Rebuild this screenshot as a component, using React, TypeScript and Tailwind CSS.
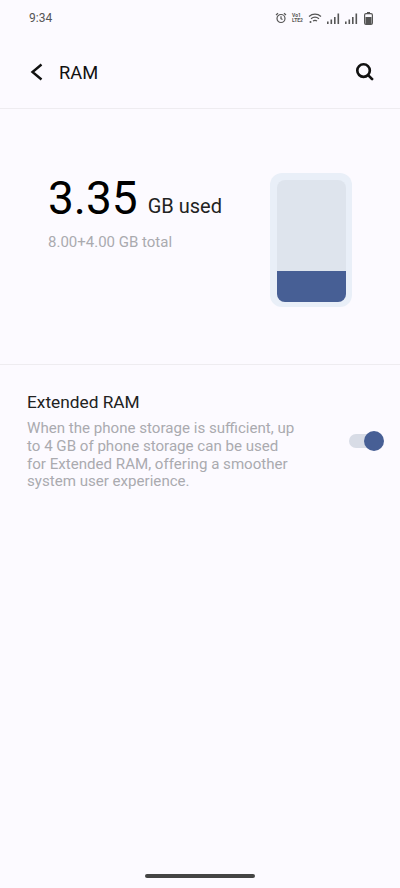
function StatusIcons() {
  return (
    <div className="flex items-center text-[#555]">
      {/* alarm */}
      <svg width="12" height="12" viewBox="0 0 12 12" fill="none" stroke="currentColor" strokeWidth="1.2">
        <circle cx="6" cy="6.5" r="4" />
        <path d="M6 4.3V6.7L7.5 7.6M1 3 3 1.2M11 3 9 1.2" />
      </svg>
      {/* volte labels */}
      <div className="ml-[5px] flex w-[13px] flex-col text-[5px] font-bold leading-[5px]">
        <span>Vo1</span>
        <span>LTE2</span>
      </div>
      {/* wifi */}
      <svg className="ml-[3px]" width="14" height="12" viewBox="0 0 14 12" fill="none" stroke="currentColor" strokeWidth="1.2">
        <path d="M1 4.5C4.5 1.4 9.5 1.4 13 4.5M3 6.8C5.3 4.9 8.7 4.9 11 6.8M5 9C6.1 8.2 7.9 8.2 9 9" />
        <circle cx="2.5" cy="10" r="1" fill="currentColor" stroke="none" />
      </svg>
      <Signal />
      <Signal />
      {/* battery */}
      <svg className="ml-[6px]" width="9" height="13" viewBox="0 0 9 13" fill="none">
        <rect x="3" y="0" width="3" height="2" fill="currentColor" />
        <rect x="0.6" y="1.6" width="7.8" height="10.8" rx="1.4" stroke="currentColor" strokeWidth="1.2" />
        <rect x="1.5" y="5" width="6" height="7" fill="currentColor" />
      </svg>
    </div>
  );
}

function Signal() {
  return (
    <svg className="ml-[5px]" width="13" height="11" viewBox="0 0 13 11" fill="currentColor">
      <rect x="0" y="8.5" width="1.6" height="2.5" />
      <rect x="3.5" y="6.5" width="1.6" height="4.5" />
      <rect x="7" y="4" width="1.6" height="7" />
      <rect x="10.5" y="0.5" width="1.6" height="10.5" />
    </svg>
  );
}

export default function App() {
  return (
    <div className="flex h-[888px] w-[400px] flex-col overflow-hidden bg-[#fcfaff] [font-family:Roboto,sans-serif]">
      {/* status bar */}
      <div className="flex h-[36px] items-center justify-between pl-[29px] pr-[27px]">
        <span className="text-[12px] text-[#555]">9:34</span>
        <StatusIcons />
      </div>

      {/* header */}
      <div className="flex h-[73px] items-center justify-between border-b border-[#eeecf0] pb-[1px] pl-[30px] pr-[26px]">
        <div className="flex items-center gap-[16px]">
          <svg width="13" height="18" viewBox="0 0 13 18" fill="none" stroke="#111" strokeWidth="2.4">
            <path d="M11.5 1.5 2.5 9l9 7.5" />
          </svg>
          <span className="pt-[2px] text-[18.3px] text-[#111]">RAM</span>
        </div>
        <svg className="mb-[1px]" width="19" height="19" viewBox="0 0 20 20" fill="none" stroke="#111" strokeWidth="2.8">
          <circle cx="9" cy="9" r="6.6" />
          <path d="M13.8 13.8 18 18" strokeLinecap="round" />
        </svg>
      </div>

      {/* usage */}
      <div className="flex h-[256px] justify-between border-b border-[#eeecf0] pl-[48px] pr-[48px] pt-[64px]">
        <div>
          <div className="flex items-baseline gap-[10px] text-black">
            <span className="text-[46px] leading-[50px]">3.35</span>
            <span className="relative top-[-1px] text-[20px] text-[#222]">GB used</span>
          </div>
          <p className="mt-[8px] text-[15px] text-[#aaaaaf]">8.00+4.00 GB total</p>
        </div>
        <div className="flex h-[134px] w-[82px] rounded-[12px] bg-[#e9eff8] pb-[5px] pl-[7px] pr-[6px] pt-[7px]">
          <div className="flex flex-1 flex-col justify-end overflow-hidden rounded-[8px] bg-[#dee4ed]">
            <div className="h-[31px] bg-[#475f95]" />
          </div>
        </div>
      </div>

      {/* extended ram */}
      <div className="flex items-center justify-between pl-[27px] pr-[16px] pt-[25px]">
        <div className="w-[272px]">
          <p className="text-[17.3px] leading-[24px] text-[#222]">Extended RAM</p>
          <p className="mt-[6px] text-[15.1px] leading-[17.8px] text-[#aaaaaf]">
            When the phone storage is sufficient, up to 4 GB of phone storage can be used for Extended RAM, offering a smoother system user experience.
          </p>
        </div>
        <div className="relative h-[14px] w-[30px] -translate-x-[5px] rounded-full bg-[#d8dce6]">
          <div className="absolute right-[-5px] top-[-3px] h-[20px] w-[20px] rounded-full bg-[#475f95]" />
        </div>
      </div>

      <div className="flex-1" />

      {/* home bar */}
      <div className="flex justify-center pb-[10px]">
        <div className="h-[4px] w-[110px] rounded-full bg-[#444]" />
      </div>
    </div>
  );
}
